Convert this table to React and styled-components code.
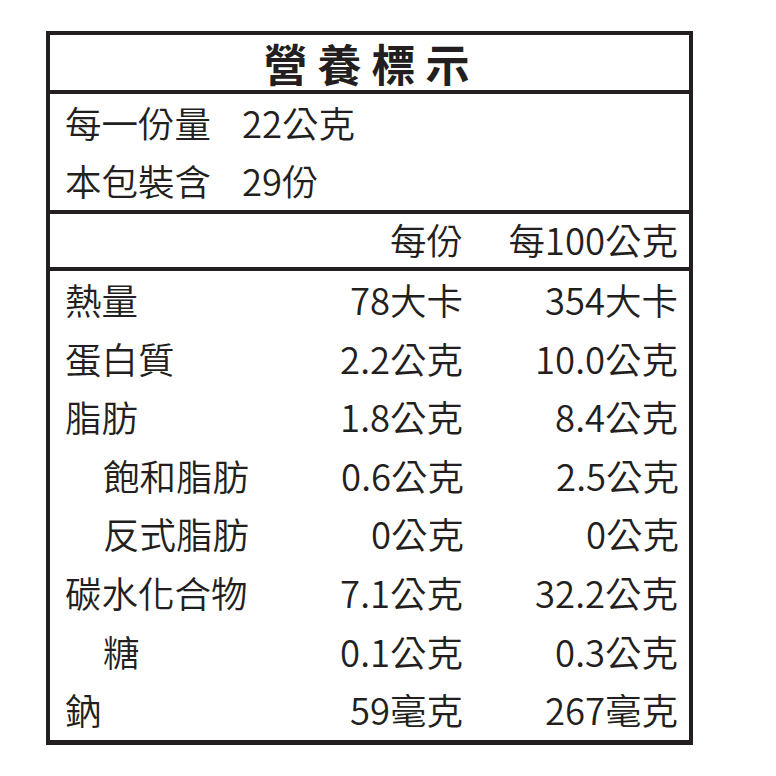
import React from "react";
import styled, { createGlobalStyle } from "styled-components";

const Global = createGlobalStyle`
  html, body { margin: 0; padding: 0; background: #ffffff; }
  body { font-family: "Noto Sans CJK TC", "Noto Sans CJK SC", "Noto Sans", sans-serif; color: #231f20; }
`;

const INK = "#231f20";

const Panel = styled.div`
  box-sizing: border-box;
  margin: 31px 0 0 46px;
  width: 647px;
  border: 4px solid ${INK};
  border-bottom-width: 5px;
`;

const TitleBar = styled.div`
  height: 55px;
  border-bottom: 4px solid ${INK};
  display: flex;
  align-items: center;
  justify-content: center;
  font-size: 44px;
  font-weight: 700;
  letter-spacing: 10px;
  padding-left: 4px;
  line-height: 1;
`;

const Section = styled.div`
  border-bottom: ${(p) => (p.$last ? "none" : `4px solid ${INK}`)};
`;

const InfoRow = styled.div`
  height: 58px;
  display: grid;
  grid-template-columns: 177px 1fr;
  align-items: center;
  padding-left: 15px;
  font-size: 36.5px;
  font-weight: 350;
  line-height: 1;
`;

const Row = styled.div`
  height: ${(p) => p.$h || 58.6}px;
  display: grid;
  grid-template-columns: 1fr 215px 215px;
  align-items: center;
  padding: 0 11px 0 15px;
  font-size: 36.5px;
  font-weight: 350;
  line-height: 1;
`;

const Label = styled.span`
  padding-left: ${(p) => (p.$indent ? 38 : 0)}px;
  white-space: nowrap;
`;

const Num = styled.span`
  text-align: right;
  white-space: nowrap;
`;

const rows = [
  ["熱量", "78大卡", "354大卡"],
  ["蛋白質", "2.2公克", "10.0公克"],
  ["脂肪", "1.8公克", "8.4公克"],
  ["飽和脂肪", "0.6公克", "2.5公克", true],
  ["反式脂肪", "0公克", "0公克", true],
  ["碳水化合物", "7.1公克", "32.2公克"],
  ["糖", "0.1公克", "0.3公克", true],
  ["鈉", "59毫克", "267毫克"],
];

export default function App() {
  return (
    <>
      <Global />
      <Panel>
        <TitleBar>營養標示</TitleBar>
        <Section>
          <InfoRow>
            <span>每一份量</span>
            <span>22公克</span>
          </InfoRow>
          <InfoRow>
            <span>本包裝含</span>
            <span>29份</span>
          </InfoRow>
        </Section>
        <Section>
          <Row $h={53}>
            <span />
            <Num>每份</Num>
            <Num>每100公克</Num>
          </Row>
        </Section>
        <Section $last>
          {rows.map(([label, a, b, indent]) => (
            <Row key={label}>
              <Label $indent={indent}>{label}</Label>
              <Num>{a}</Num>
              <Num>{b}</Num>
            </Row>
          ))}
        </Section>
      </Panel>
    </>
  );
}
